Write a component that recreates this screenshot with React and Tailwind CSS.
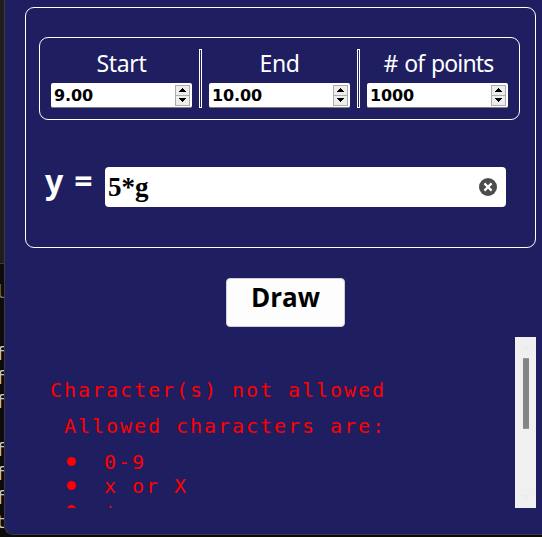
import React from "react";

const params = [
  { label: "Start", value: "9.00", track: "tracking-[-0.3px]" },
  { label: "End", value: "10.00", track: "tracking-[-0.4px]" },
  { label: "# of points", value: "1000", track: "tracking-[-0.85px] [word-spacing:1.5px] pl-[2px]" },
];

const codeLines = ["f", "f", "f", "", "f", "f", "f", "t"];

function Spinner() {
  return (
    <svg width="15" height="21" viewBox="0 0 15 21" className="mt-[2px] mr-[2px] shrink-0" shapeRendering="crispEdges">
      <rect width="15" height="21" fill="#adadad" />
      <rect x="1" y="1" width="13" height="9" fill="#ededed" />
      <rect x="1" y="11" width="13" height="9" fill="#ededed" />
      <path d="M7 3h1v1h1v1h1v1h1v1H4V6h1V5h1V4h1z" fill="#000" />
      <path d="M4 13h7v1h-1v1H9v1H8v1H7v-1H6v-1H5v-1H4z" fill="#000" />
    </svg>
  );
}

function Field({ label, value, track }) {
  return (
    <div className="w-[141px]">
      <div className={`h-[34px] text-center text-[23px] leading-[29px] text-white whitespace-nowrap ${track}`}>{label}</div>
      <div className="flex h-[25px] justify-between overflow-hidden rounded-[2px] border-b border-[#808080] bg-white">
        <span className="pl-[3px] font-['DejaVu_Sans',sans-serif] text-[16px] leading-[26px] font-bold tracking-[-0.1px] text-black">{value}</span>
        <Spinner />
      </div>
    </div>
  );
}

function Separator() {
  return <div className="h-[59px] w-[3px] border border-white" />;
}

function Bullet({ children }) {
  return (
    <li className="flex h-6 items-start">
      <span className="mt-[7px] mr-[28px] ml-[16px] size-[9px] shrink-0 rounded-full bg-[#ff0000]" />
      <span>{children}</span>
    </li>
  );
}

export default function App() {
  return (
    <div className="flex h-[537px] w-[542px] overflow-hidden bg-[#0c0c0c] font-['Noto_Sans','Open_Sans',sans-serif]">
      <div className="h-full w-[4px] shrink-0">
        <div className="h-[264px] border-b border-[#3c3c3c] bg-[#1e1e1e]" />
        <div className="pt-[16px] font-['DejaVu_Sans_Mono',monospace] text-[18px] leading-6 text-[#c8c8c8]">
          <div className="-ml-[5px] h-[62px] text-[#77776a]">l</div>
          {codeLines.map((c, i) => (
            <div key={i} className="-ml-[5px] h-6">{c}</div>
          ))}
        </div>
      </div>
      <div className="h-[535px] w-[538px] overflow-hidden rounded-bl-[9px] border-b border-l border-[#3c3a3a] bg-[#1e1e60]">
        <section className="mt-[7px] ml-[20px] h-[241px] w-[511px] rounded-[9px] border border-white pt-[29px] pl-[13px]">
          <div className="flex h-[83px] w-[481px] justify-between rounded-[9px] border border-white pt-[11px] pr-[11px] pl-[11px]">
            <Field {...params[0]} />
            <Separator />
            <Field {...params[1]} />
            <Separator />
            <Field {...params[2]} />
          </div>
          <div className="mt-[47px] flex h-[40px] items-start">
            <span className="flex w-[66px] gap-[11px] pl-[6px] text-[32px] leading-[28px] font-bold text-white">
              <span>y</span>
              <span>=</span>
            </span>
            <div className="flex h-[40px] w-[401px] items-center justify-between rounded-[4px] bg-white pr-[9px] pl-[3px]">
              <span className="font-['Liberation_Serif',serif] text-[27px] leading-[40px] font-bold text-black">5*g</span>
              <svg width="18" height="18" viewBox="0 0 18 18">
                <circle cx="9" cy="9" r="9" fill="#4d4d4d" />
                <path d="M5.4 5.4l7.2 7.2M12.6 5.4l-7.2 7.2" stroke="#fff" strokeWidth="2.2" />
              </svg>
            </div>
          </div>
        </section>
        <button className="mt-[30px] ml-[221px] block h-[49px] w-[119px] rounded-[4px] border border-[#d0d0d0] bg-[#fdfdfd] pb-[10px] text-center font-['Open_Sans',sans-serif] text-[26px] leading-[37px] font-bold text-black">
          Draw
        </button>
        <div className="mt-[10px] ml-[45px] flex h-[171px] w-[486px] justify-between overflow-hidden">
          <div className="pt-[41px] font-['DejaVu_Sans_Mono',monospace] text-[20px] leading-6 tracking-[1.96px] whitespace-pre text-[#ff0000]">
            <p className="h-9">Character(s) not allowed</p>
            <p className="h-9 pl-[14px]">Allowed characters are:</p>
            <ul className="pl-px">
              <Bullet>0-9</Bullet>
              <Bullet>x or X</Bullet>
              <Bullet>+</Bullet>
            </ul>
          </div>
          <div className="flex h-full w-[21px] flex-col items-center justify-between bg-[#f0f0f0] pt-[8px] pb-[8px]">
            <svg width="8" height="5" viewBox="0 0 8 5" className="shrink-0"><path d="M4 0l4 5H0z" fill="#ebebeb" /></svg>
            <div className="mt-[8px] mb-auto h-[71px] w-[6px] border-y border-[#969696] bg-[#858585]" />
            <svg width="8" height="5" viewBox="0 0 8 5" className="shrink-0"><path d="M0 0h8L4 5z" fill="#ebebeb" /></svg>
          </div>
        </div>
      </div>
    </div>
  );
}
